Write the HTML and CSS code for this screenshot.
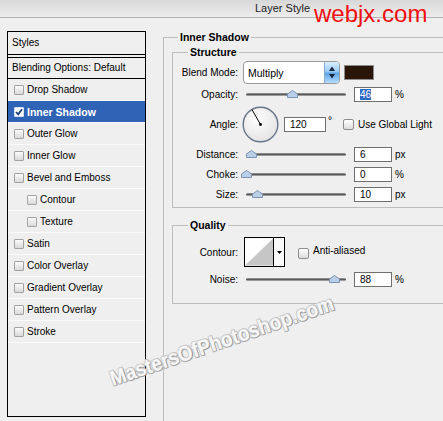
FILE: index.html
```html
<!DOCTYPE html>
<html lang="en">

<head>
  <meta charset="utf-8">
  <title>Layer Style</title>

  <link rel="stylesheet" href="styles.css">
</head>

<body>
  <div class="dialog">
    <header class="titlebar">
      <span class="title">Layer Style</span>
    </header>

    <main class="dialog-body">
      <!-- lista de efeitos -->
      <ul class="styles-list">
        <li class="list-head">Styles</li>
        <li class="list-blend">Blending Options: Default</li>
        <li class="list-item"><span class="box"></span>Drop Shadow</li>
        <li class="list-item selected">
          <span class="box checked">
            <svg width="8" height="8" viewBox="0 0 8 8"><path d="M1 4 L3.2 6.4 L7 1.2" fill="none" stroke="#1f3f78" stroke-width="1.8"/></svg>
          </span>Inner Shadow
        </li>
        <li class="list-item"><span class="box"></span>Outer Glow</li>
        <li class="list-item"><span class="box"></span>Inner Glow</li>
        <li class="list-item"><span class="box"></span>Bevel and Emboss</li>
        <li class="list-item sub"><span class="box"></span>Contour</li>
        <li class="list-item sub"><span class="box"></span>Texture</li>
        <li class="list-item"><span class="box"></span>Satin</li>
        <li class="list-item"><span class="box"></span>Color Overlay</li>
        <li class="list-item"><span class="box"></span>Gradient Overlay</li>
        <li class="list-item"><span class="box"></span>Pattern Overlay</li>
        <li class="list-item"><span class="box"></span>Stroke</li>
      </ul>

      <fieldset class="group group-main">
        <legend>Inner Shadow</legend>

        <fieldset class="group group-sub group-structure">
          <legend>Structure</legend>

          <div class="row row-blend">
            <span class="row-label">Blend Mode:</span>
            <div class="select">
              <span class="select-value">Multiply</span>
              <span class="select-btn">
                <svg width="14" height="21" viewBox="0 0 14 21">
                  <polygon points="7,4.5 10,9 4,9" fill="#16243c"/>
                  <polygon points="4,12 10,12 7,16.5" fill="#16243c"/>
                </svg>
              </span>
            </div>
            <span class="swatch"></span>
          </div>

          <div class="row">
            <span class="row-label">Opacity:</span>
            <div class="slider"><svg class="thumb" style="left: 46%" width="11" height="8" viewBox="0 0 11 8"><path d="M0.5 7.5 L0.5 4 L5.5 0.5 L10.5 4 L10.5 7.5 Z" fill="#b9cfe8" stroke="#7d93b3"/></svg></div>
            <span class="field"><span class="highlight">46</span></span>
            <span class="unit">%</span>
          </div>

          <div class="row row-angle">
            <span class="row-label">Angle:</span>
            <svg class="dial" width="37" height="37" viewBox="0 0 37 37">
              <defs>
                <radialGradient id="dialfill" cx="40%" cy="35%" r="70%">
                  <stop offset="0" stop-color="#ffffff"/>
                  <stop offset="1" stop-color="#e2e2e2"/>
                </radialGradient>
              </defs>
              <circle cx="18.5" cy="18.5" r="17.3" fill="url(#dialfill)" stroke="#66758c" stroke-width="1.4"/>
              <line x1="18.5" y1="18.5" x2="10" y2="3.6" stroke="#000" stroke-width="1"/>
              <circle cx="18.5" cy="18.5" r="1.4" fill="#000"/>
            </svg>
            <span class="field field-angle">120</span>
            <span class="degree">°</span>
            <span class="check"></span>
            <span>Use Global Light</span>
          </div>

          <div class="row">
            <span class="row-label">Distance:</span>
            <div class="slider"><svg class="thumb" style="left: 5%" width="11" height="8" viewBox="0 0 11 8"><path d="M0.5 7.5 L0.5 4 L5.5 0.5 L10.5 4 L10.5 7.5 Z" fill="#b9cfe8" stroke="#7d93b3"/></svg></div>
            <span class="field">6</span>
            <span class="unit">px</span>
          </div>

          <div class="row">
            <span class="row-label">Choke:</span>
            <div class="slider"><svg class="thumb" style="left: 0%" width="11" height="8" viewBox="0 0 11 8"><path d="M0.5 7.5 L0.5 4 L5.5 0.5 L10.5 4 L10.5 7.5 Z" fill="#b9cfe8" stroke="#7d93b3"/></svg></div>
            <span class="field">0</span>
            <span class="unit">%</span>
          </div>

          <div class="row">
            <span class="row-label">Size:</span>
            <div class="slider"><svg class="thumb" style="left: 11%" width="11" height="8" viewBox="0 0 11 8"><path d="M0.5 7.5 L0.5 4 L5.5 0.5 L10.5 4 L10.5 7.5 Z" fill="#b9cfe8" stroke="#7d93b3"/></svg></div>
            <span class="field">10</span>
            <span class="unit">px</span>
          </div>
        </fieldset>

        <fieldset class="group group-sub group-quality">
          <legend>Quality</legend>

          <div class="row row-contour">
            <span class="row-label">Contour:</span>
            <div class="contour">
              <svg class="contour-preview" width="29" height="28" viewBox="0 0 29 28">
                <rect width="29" height="28" fill="#fff"/>
                <polygon points="0,28 29,0 29,28" fill="#c6c6c6"/>
              </svg>
              <span class="contour-arrow">
                <svg width="5" height="3" viewBox="0 0 5 3"><polygon points="0,0 5,0 2.5,3" fill="#000"/></svg>
              </span>
            </div>
            <span class="check check-aa"></span>
            <span class="aa-label">Anti-aliased</span>
          </div>

          <div class="row row-noise">
            <span class="row-label">Noise:</span>
            <div class="slider"><svg class="thumb" style="left: 88%" width="11" height="8" viewBox="0 0 11 8"><path d="M0.5 7.5 L0.5 4 L5.5 0.5 L10.5 4 L10.5 7.5 Z" fill="#b9cfe8" stroke="#7d93b3"/></svg></div>
            <span class="field">88</span>
            <span class="unit">%</span>
          </div>
        </fieldset>
      </fieldset>
    </main>

    <!-- carimbos por cima da janela -->
    <div class="brand">webjx.com</div>
    <div class="watermark">MastersOfPhotoshop.com</div>
  </div>
</body>

</html>
```

FILE: styles.css
```css
* {
  box-sizing: border-box;
}

html,
body {
  margin: 0;
  height: 100%;
  overflow: hidden;
}

body {
  background: #efefef;
  font-family: "Liberation Sans", Arial, sans-serif;
  font-size: 10px;
  color: #000;
}

.dialog {
  position: relative;
  width: 443px;
  height: 421px;
  overflow: hidden;
}

/* barra de titulo */
.titlebar {
  display: flex;
  align-items: flex-start;
  height: 18px;
  background: linear-gradient(#d8d8d8, #ededed);
  border-bottom: 1px solid #b3b3b3;
}

.title {
  margin-left: 255px;
  font-size: 11px;
  line-height: 17px;
  color: #1c1c1c;
}

.brand {
  position: absolute;
  left: 314px;
  top: 0;
  font-size: 24px;
  line-height: normal;
  color: #f20f0f;
}

.dialog-body {
  display: flex;
  align-items: flex-start;
  padding: 13px 0 0 7px;
}

/* lista da esquerda */
.styles-list {
  flex: none;
  width: 139px;
  height: 386px;
  margin: 0;
  padding: 0;
  list-style: none;
  border: 1px solid #000;
}

.list-head {
  height: 23px;
  padding-left: 4px;
  line-height: 22px;
  border-bottom: 1px solid #000;
}

.list-blend {
  height: 22px;
  margin-top: 2px;
  padding-left: 4px;
  line-height: 20px;
  border-top: 1px solid #000;
  border-bottom: 1px solid #000;
}

.list-item {
  display: flex;
  align-items: center;
  height: 22px;
  padding-left: 6px;
  border-bottom: 1px solid #fafafa;
}

.list-item.sub {
  padding-left: 19px;
}

.list-item.selected {
  background: #2f63b5;
  color: #fff;
  font-weight: bold;
  font-size: 10.5px;
}

.box {
  flex: none;
  display: flex;
  align-items: center;
  justify-content: center;
  width: 10px;
  height: 10px;
  margin-right: 3px;
  border: 1px solid #a2a2a2;
  border-radius: 1px;
  background: linear-gradient(#fbfbfb, #d9d9d9);
}

.box.checked {
  border-color: #d8e2f2;
  background: #fff;
}

/* paineis da direita */
.group {
  margin: 0;
  border: 1px solid #bdbdbd;
}

.group legend {
  padding: 0 2px;
  font-size: 10.5px;
  font-weight: bold;
  line-height: 13px;
}

.group-main {
  flex: none;
  width: 320px;
  height: 420px;
  margin-left: 17px;
  padding: 0 0 0 8px;
}

.group-main > legend {
  margin-left: 6px;
  line-height: 13px;
}

.group-sub > legend {
  margin-left: 15px;
}

.group-structure {
  margin-top: 2px;
  padding: 1px 0 3px 0;
}

.group-quality {
  margin-top: 11px;
  padding: 4px 0 13px 0;
}

.row {
  display: flex;
  align-items: center;
  height: 20px;
}

.row-blend {
  height: 24px;
}

.row-angle {
  height: 40px;
}

.row-contour {
  height: 32px;
}

.row-noise {
  height: 22px;
}

.row-label {
  flex: none;
  width: 65px;
  margin-right: 5px;
  text-align: right;
}

.select {
  display: flex;
  flex: none;
  width: 97px;
  height: 23px;
  border: 1px solid #9a9a9a;
  border-radius: 4px;
  background: #fff;
  overflow: hidden;
}

.select-value {
  flex: 1;
  padding-left: 4px;
  font-size: 10.5px;
  line-height: 22px;
}

.select-btn {
  display: flex;
  width: 15px;
  border-left: 1px solid #86aed4;
  background: linear-gradient(#dcefff, #93c8f4 48%, #5aa3e6 52%, #b4dcfc);
}

.swatch {
  flex: none;
  width: 30px;
  height: 15px;
  margin-left: 4px;
  background: #2a1609;
  border: 1px solid #8c8c8c;
}

.slider {
  position: relative;
  flex: none;
  width: 100px;
  height: 3px;
  margin: 0 8px 0 3px;
  border-radius: 2px;
  background: linear-gradient(#a0a0a0, #4c4c4c 60%, #d2d2d2);
}

.thumb {
  position: absolute;
  top: -3px;
  margin-left: -5px;
}

.field {
  flex: none;
  width: 38px;
  height: 15px;
  padding-left: 5px;
  border: 1px solid #6f6f6f;
  background: #fff;
  line-height: 13px;
}

.highlight {
  background: #316ac5;
  color: #fff;
}

.unit {
  margin-left: 3px;
}

.dial {
  flex: none;
  margin-left: -1px;
}

.field-angle {
  width: 42px;
  margin-left: 5px;
}

.degree {
  margin: 0 0 7px 2px;
}

.check {
  flex: none;
  width: 11px;
  height: 11px;
  margin: 0 4px 0 11px;
  border: 1px solid #8d8d8d;
  border-radius: 2px;
  background: linear-gradient(#fff, #dcdcdc);
}

.contour {
  display: flex;
  flex: none;
  width: 41px;
  height: 30px;
  margin-left: 1px;
  border: 1px solid #000;
}

.contour-preview {
  border-right: 1px solid #000;
}

.contour-arrow {
  display: flex;
  flex: 1;
  align-items: center;
  justify-content: center;
  background: #fafafa;
}

.check-aa {
  margin: 2px 4px 0 13px;
}

.aa-label {
  margin-bottom: 4px;
}

/* marca d'agua */
.watermark {
  position: absolute;
  left: 222px;
  top: 341px;
  transform: translate(-50%, -50%) rotate(-19deg) scaleX(0.9);
  white-space: nowrap;
  font-size: 21px;
  font-weight: bold;
  color: #f7f7f7;
  text-shadow: -1px -1px 0 #cfcfcf, 1px 1px 0 #9a9a9a, 1px -1px 0 #c4c4c4, -1px 1px 0 #b8b8b8;
}
```
